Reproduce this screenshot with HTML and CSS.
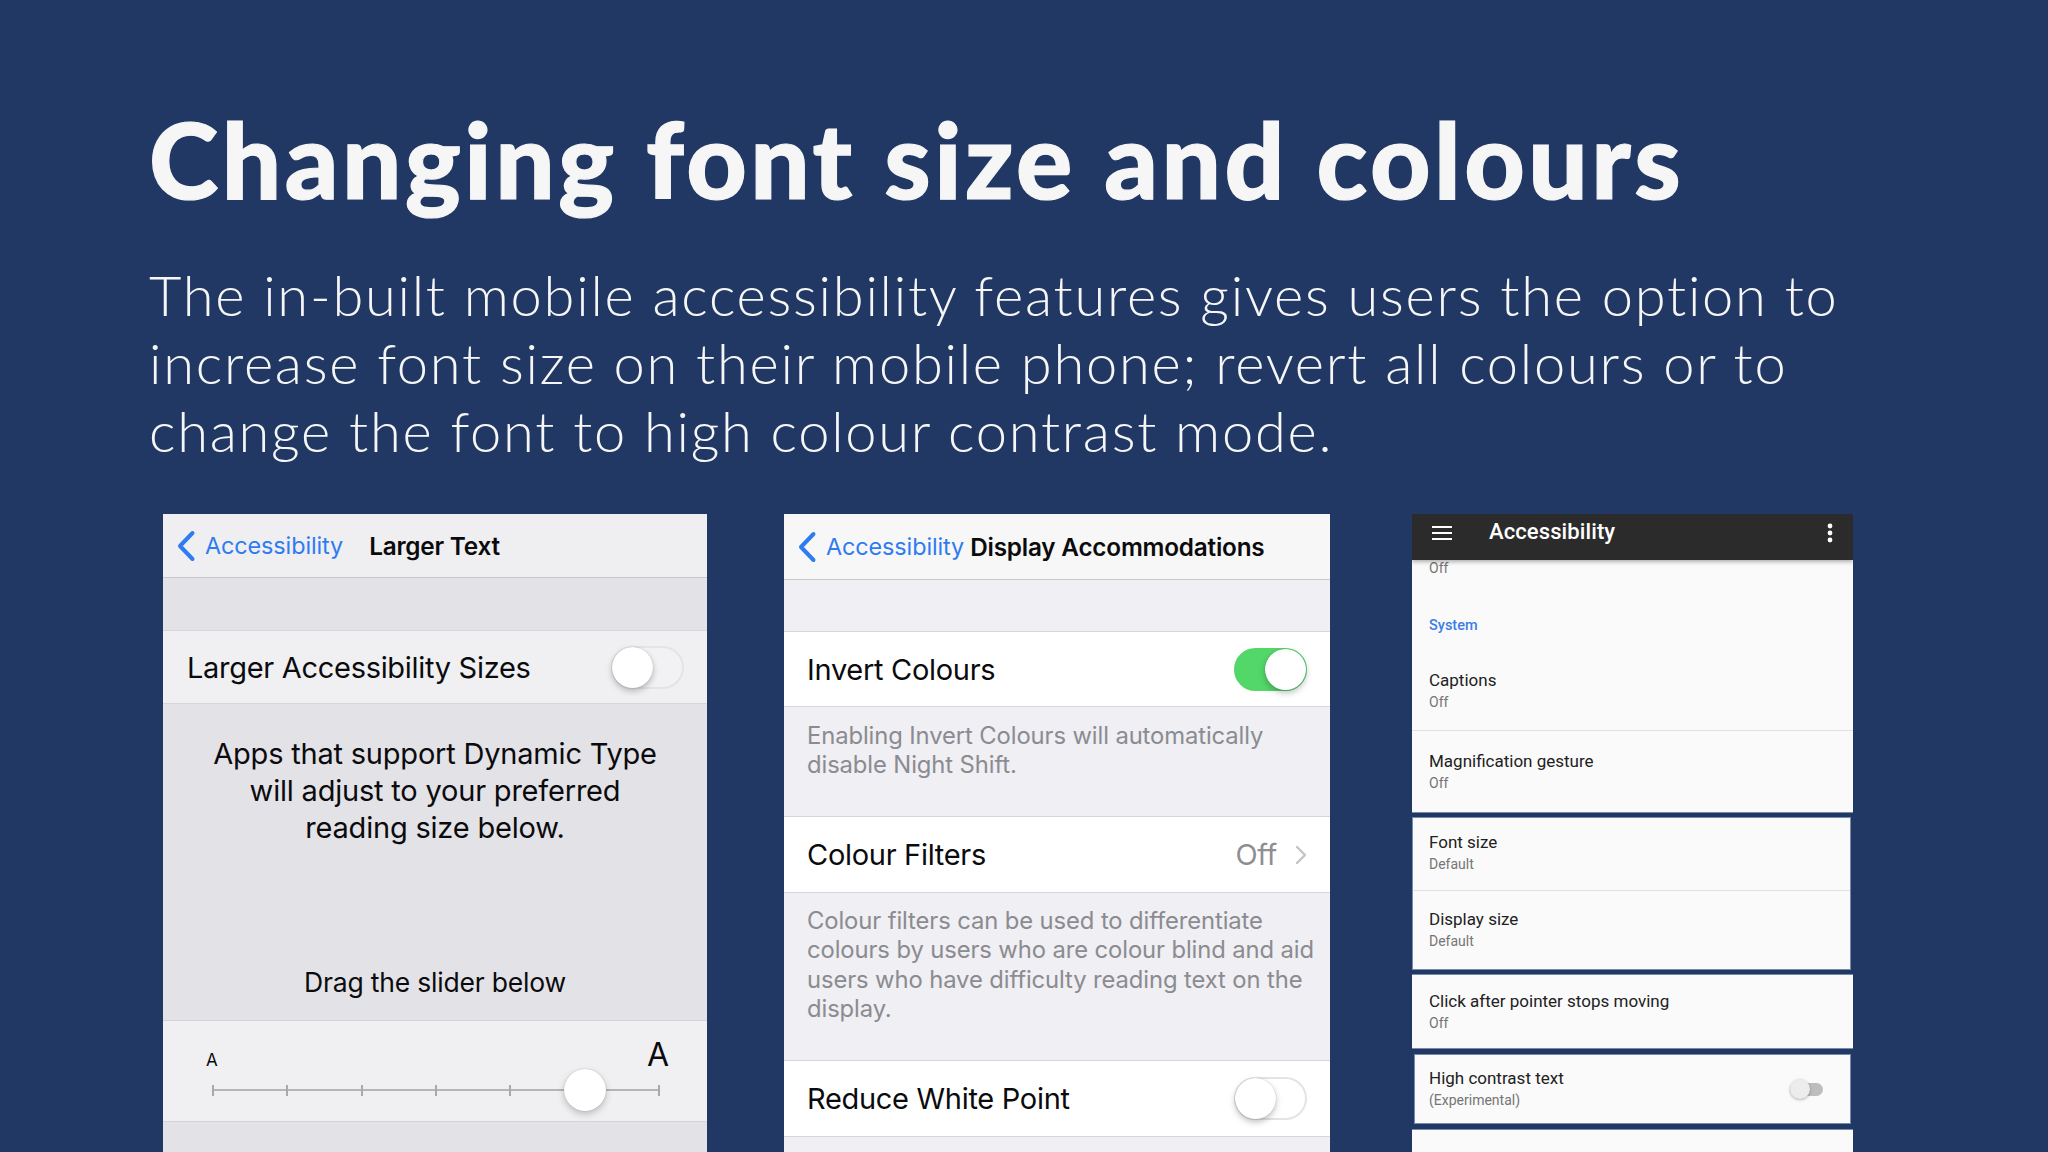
FILE: index.html
```html
<!DOCTYPE html>
<html lang="en">
<head>
<meta charset="utf-8">
<title>Changing font size and colours</title>
<link rel="stylesheet" href="styles.css">
</head>
<body>
<main class="slide">
  <header class="intro">
    <h1 class="title">Changing font size and colours</h1>
    <p class="lead">The in-built mobile accessibility features gives users the option to<br>increase font size on their mobile phone; revert all colours or to<br>change the font to high colour contrast mode.</p>
  </header>

  <div class="panels">
    <section class="phone ios larger">
      <div class="nav">
        <span class="back"><svg class="chev" viewBox="0 0 20 32"><path d="M16.5 3 L4 16 L16.5 29"/></svg>Accessibility</span>
        <span class="nav-title nt-larger">Larger Text</span>
      </div>
      <div class="band"></div>
      <div class="row"><span class="label">Larger Accessibility Sizes</span><span class="toggle"><span class="knob"></span></span></div>
      <div class="explain">
        <p class="explain-text">Apps that support Dynamic Type<br>will adjust to your preferred<br>reading size below.</p>
        <p class="drag">Drag the slider below</p>
      </div>
      <div class="slider-row">
        <div class="sl-labels"><span class="a-small">A</span><span class="a-big">A</span></div>
        <div class="sl-track"><i></i><i></i><i></i><i></i><i></i><i></i><i></i><span class="sl-knob"></span></div>
      </div>
      <div class="fill"></div>
    </section>

    <section class="phone ios display">
      <div class="nav">
        <span class="back"><svg class="chev" viewBox="0 0 20 32"><path d="M16.5 3 L4 16 L16.5 29"/></svg>Accessibility</span>
        <span class="nav-title nt-display">Display Accommodations</span>
      </div>
      <div class="band"></div>
      <div class="row"><span class="label">Invert Colours</span><span class="toggle on"><span class="knob"></span></span></div>
      <div class="note n1">Enabling Invert Colours will automatically<br>disable Night Shift.</div>
      <div class="row"><span class="label">Colour Filters</span><span class="detail">Off<svg class="disc" viewBox="0 0 12 20"><path d="M2 2 L10 10 L2 18"/></svg></span></div>
      <div class="note n2">Colour filters can be used to differentiate<br>colours by users who are colour blind and aid<br>users who have difficulty reading text on the<br>display.</div>
      <div class="row"><span class="label">Reduce White Point</span><span class="toggle"><span class="knob"></span></span></div>
      <div class="fill"></div>
    </section>

    <section class="phone android">
      <div class="card card-a">
        <div class="abar">
          <svg class="burger" viewBox="0 0 20 16"><path d="M0 2h20M0 8h20M0 14h20"/></svg>
          <span class="abar-title">Accessibility</span>
          <svg class="dots" viewBox="0 0 6 20"><circle cx="3" cy="3" r="2.4"/><circle cx="3" cy="10" r="2.4"/><circle cx="3" cy="17" r="2.4"/></svg>
        </div>
        <div class="a-cut">Off</div>
        <div class="a-section">System</div>
        <div class="a-item h78 div"><span class="a-t">Captions</span><span class="a-s">Off</span></div>
        <div class="a-item h81"><span class="a-t">Magnification gesture</span><span class="a-s">Off</span></div>
      </div>
      <div class="card card-b">
        <div class="a-item h73 div"><span class="a-t">Font size</span><span class="a-s">Default</span></div>
        <div class="a-item h78"><span class="a-t">Display size</span><span class="a-s">Default</span></div>
      </div>
      <div class="card card-c">
        <div class="a-item h73"><span class="a-t">Click after pointer stops moving</span><span class="a-s">Off</span></div>
      </div>
      <div class="card card-d">
        <div class="a-item h68 sw-item">
          <div class="a-text"><span class="a-t">High contrast text</span><span class="a-s">(Experimental)</span></div>
          <span class="a-switch"><span class="a-thumb"></span></span>
        </div>
      </div>
      <div class="card card-e">
        <div class="a-item h40 sw-item"><div class="a-text"></div><span class="a-switch low"><span class="a-thumb"></span></span></div>
      </div>
    </section>
  </div>
</main>
</body>
</html>
```

FILE: styles.css
```css
* { box-sizing: border-box; margin: 0; padding: 0; }
html, body { width: 2048px; height: 1152px; overflow: hidden; }
body { background: #213864; font-family: Lato, "Noto Sans", sans-serif; color: #f6f6f6; }

.intro { padding-left: 149px; }
.title { font-weight: 900; font-size: 105px; line-height: 105px; padding-top: 106px; letter-spacing: 3.5px; white-space: nowrap; -webkit-text-stroke: 1.2px #f6f6f6; }
.lead { font-weight: 300; font-size: 56px; line-height: 68px; margin-top: 50px; letter-spacing: 1.75px; white-space: nowrap; }

.panels { display: flex; align-items: flex-start; padding-left: 163px; margin-top: 49px; height: 639px; overflow: hidden; }
.phone { height: 639px; overflow: hidden; flex: none; }
.ios { font-family: Inter, "Liberation Sans", sans-serif; color: #0b0b0d; display: flex; flex-direction: column; white-space: nowrap; }
.larger { width: 544px; background: #e3e2e7; }
.display { width: 546px; margin-left: 77px; background: #efeff4; }
.android { width: 441px; margin-left: 82px; font-family: Roboto, "Noto Sans", sans-serif; white-space: nowrap; margin-top: -1px; }

/* iOS nav */
.nav { display: flex; align-items: center; height: 64px; padding-left: 13px; border-bottom: 1px solid #c9c9cd; flex: none; }
.larger .nav { background: #efeff1; }
.display .nav { background: #f7f7f8; height: 66px; }
.back { display: flex; align-items: center; color: #2f7bf0; font-size: 23.4px; letter-spacing: -0.1px; }
.chev { width: 20px; height: 32px; margin-right: 9px; fill: none; stroke: #2f7bf0; stroke-width: 4; stroke-linecap: round; stroke-linejoin: round; }
.nav-title { font-weight: 600; font-size: 24.3px; letter-spacing: -0.2px; }
.nt-larger { margin-left: 26px; }
.nt-display { margin-left: 6px; }

.band { height: 52px; flex: none; }
.display .band { height: 51px; }

.row { display: flex; align-items: center; justify-content: space-between; padding: 0 23px 0 24px; flex: none; border-top: 1px solid #d6d6da; border-bottom: 1px solid #d6d6da; font-size: 29px; letter-spacing: -0.3px; }
.larger .row { height: 74px; background: #f0f0f2; }
.display .row { height: 77px; background: #ffffff; padding-left: 23px; }
.display .row:nth-of-type(3) { height: 76px; }

.toggle { width: 73px; height: 43px; border-radius: 22px; background: #fff; border: 2px solid #e4e4e8; display: flex; align-items: center; padding: 0; }
.larger .toggle { background: #f2f2f4; }
.knob { width: 41px; height: 41px; border-radius: 50%; background: #fff; box-shadow: 0 3px 6px rgba(0,0,0,0.25), 0 0 1px rgba(0,0,0,0.25); margin-left: -1px; }
.toggle.on { background: #53d769; border-color: #53d769; justify-content: flex-end; }
.toggle.on .knob { margin-left: 0; margin-right: -1px; }

.detail { display: flex; align-items: center; color: #8e8e93; }
.disc { width: 12px; height: 20px; margin-left: 18px; fill: none; stroke: #c4c4c8; stroke-width: 2.4; stroke-linecap: round; stroke-linejoin: round; }

.explain { height: 316px; flex: none; text-align: center; font-size: 29px; line-height: 37px; letter-spacing: -0.2px; padding-top: 31px; }
.drag { margin-top: 118px; font-size: 26.5px; }

.slider-row { height: 102px; flex: none; background: #f0f0f2; border-top: 1px solid #d4d4d8; border-bottom: 1px solid #d4d4d8; }
.sl-labels { display: flex; justify-content: space-between; align-items: baseline; padding: 18px 38px 0 43px; height: 56px; }
.a-small { font-size: 17px; line-height: 31px; }
.a-big { font-size: 32px; line-height: 31px; }
.sl-track { position: relative; height: 12px; margin: 7px 47px 0 49px; display: flex; justify-content: space-between; align-items: center; }
.sl-track::before { content: ""; position: absolute; left: 0; right: 0; top: 5px; height: 2px; background: #b5b5b9; }
.sl-track i { width: 2px; height: 11px; background: #a9a9ad; position: relative; }
.sl-knob { position: absolute; left: 83.33%; top: 50%; width: 42px; height: 42px; margin: -21px 0 0 -21px; border-radius: 50%; background: #fff; box-shadow: 0 3px 7px rgba(0,0,0,0.22), 0 0 1px rgba(0,0,0,0.3); }

.note { flex: none; color: #8b8b90; font-size: 23.8px; line-height: 29.3px; letter-spacing: -0.1px; padding-left: 23px; }
.n1 { height: 109px; padding-top: 14px; }
.n2 { height: 167px; padding-top: 13px; }
.fill { flex: 1; }

/* Android */
.card { background: #fafafa; box-shadow: 0 0 0 1px rgba(190,205,230,0.55); }
.card-a { width: 441px; }
.card-b { width: 437px; margin: 6px 0 0 1px; }
.card-c { width: 441px; margin-top: 6px; }
.card-d { width: 435px; margin: 7px 0 0 3px; }
.card-e { width: 441px; margin-top: 7px; }

.abar { height: 47px; background: #2b2b2b; display: flex; align-items: center; padding: 0 20px 8px 20px; box-shadow: 0 2px 4px rgba(0,0,0,0.3); position: relative; }
.burger { width: 20px; height: 16px; fill: none; stroke: #fff; stroke-width: 2.2; }
.abar-title { color: #fff; font-weight: 500; font-size: 22px; margin-left: 37px; flex: 1; letter-spacing: 0.1px; margin-top: -2px; }
.dots { width: 6px; height: 20px; fill: #fff; }

.a-cut { height: 34px; line-height: 16px; padding-left: 17px; color: #757575; font-size: 14px; }
.a-section { height: 59px; padding: 3px 0 0 17px; display: flex; align-items: center; color: #3c7ee6; font-weight: 500; font-size: 14.5px; }
.a-item { display: flex; flex-direction: column; justify-content: center; padding-left: 17px; }
.card-b .a-item { padding-left: 16px; }
.card-d .a-item { padding-left: 14px; }
.a-item.div { border-bottom: 1px solid #e2e2e2; }
.h78 { height: 78px; }
.h81 { height: 81px; }
.h73 { height: 73px; }
.h68 { height: 68px; }
.h40 { height: 40px; }
.a-t { color: #212121; font-size: 17px; line-height: 22px; }
.a-s { color: #757575; font-size: 14px; line-height: 22px; }
.card-a .h78 .a-s, .card-b .h73 .a-s { margin-bottom: 2px; }
.sw-item { flex-direction: row; align-items: center; justify-content: space-between; padding-right: 27px; }
.a-text { display: flex; flex-direction: column; }
.a-switch { width: 33px; height: 13px; border-radius: 7px; background: #bdbdbd; display: flex; align-items: center; }
.a-thumb { width: 20px; height: 20px; border-radius: 50%; background: #ececec; box-shadow: 0 1px 3px rgba(0,0,0,0.3); }
.a-switch.low { margin-top: 40px; }
```
